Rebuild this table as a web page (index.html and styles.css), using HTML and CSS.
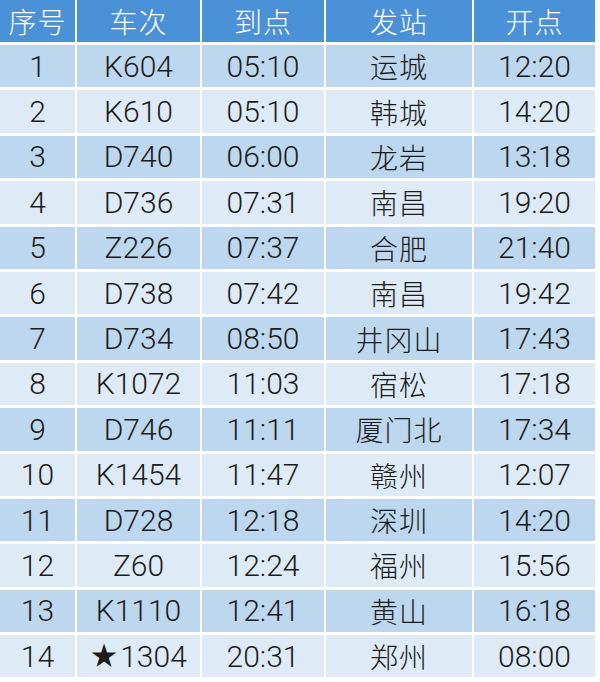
FILE: index.html
```html
<!DOCTYPE html>
<html lang="zh">
<head>
<meta charset="utf-8">
<link rel="stylesheet" href="styles.css">
</head>
<body>
<div class="sched">
  <div class="hd">序号</div><div class="hd">车次</div><div class="hd">到点</div><div class="hd">发站</div><div class="hd">开点</div>

  <div class="c d">1</div><div class="c d">K604</div><div class="c d">05:10</div><div class="c d zh">运城</div><div class="c d">12:20</div>
  <div class="c l">2</div><div class="c l">K610</div><div class="c l">05:10</div><div class="c l zh">韩城</div><div class="c l">14:20</div>
  <div class="c d">3</div><div class="c d">D740</div><div class="c d">06:00</div><div class="c d zh">龙岩</div><div class="c d">13:18</div>
  <div class="c l">4</div><div class="c l">D736</div><div class="c l">07:31</div><div class="c l zh">南昌</div><div class="c l">19:20</div>
  <div class="c d">5</div><div class="c d">Z226</div><div class="c d">07:37</div><div class="c d zh">合肥</div><div class="c d">21:40</div>
  <div class="c l">6</div><div class="c l">D738</div><div class="c l">07:42</div><div class="c l zh">南昌</div><div class="c l">19:42</div>
  <div class="c d">7</div><div class="c d">D734</div><div class="c d">08:50</div><div class="c d zh">井冈山</div><div class="c d">17:43</div>
  <div class="c l">8</div><div class="c l">K1072</div><div class="c l">11:03</div><div class="c l zh">宿松</div><div class="c l">17:18</div>
  <div class="c d">9</div><div class="c d">D746</div><div class="c d">11:11</div><div class="c d zh">厦门北</div><div class="c d">17:34</div>
  <div class="c l">10</div><div class="c l">K1454</div><div class="c l">11:47</div><div class="c l zh">赣州</div><div class="c l">12:07</div>
  <div class="c d">11</div><div class="c d">D728</div><div class="c d">12:18</div><div class="c d zh">深圳</div><div class="c d">14:20</div>
  <div class="c l">12</div><div class="c l">Z60</div><div class="c l">12:24</div><div class="c l zh">福州</div><div class="c l">15:56</div>
  <div class="c d">13</div><div class="c d">K1110</div><div class="c d">12:41</div><div class="c d zh">黄山</div><div class="c d">16:18</div>
  <div class="c l">14</div><div class="c l"><span class="star">★</span>1304</div><div class="c l">20:31</div><div class="c l zh">郑州</div><div class="c l">08:00</div>
</div>
</body>
</html>
```

FILE: styles.css
```css
html, body {
  margin: 0;
  padding: 0;
  background: #ffffff;
}

.sched {
  display: grid;
  grid-template-columns: 75px 123px 122px 146px 121px;
  grid-template-rows: 42px repeat(14, 42.4px);
  column-gap: 2px;
  row-gap: 3px;
  width: 595px;
}

.hd, .c {
  display: flex;
  align-items: center;
  justify-content: center;
}

.hd {
  background: #4b91d8;
  color: #ffffff;
  font-family: "Noto Sans CJK SC", sans-serif;
  font-weight: 300;
  font-size: 28px;
  letter-spacing: 1px;
}

.c {
  color: #1c1c1c;
  font-family: "Roboto", "Noto Sans CJK SC", sans-serif;
  font-weight: 300;
  font-size: 30px;
}

.c.zh {
  font-family: "Noto Sans CJK SC", sans-serif;
  font-weight: 300;
  font-size: 28px;
  letter-spacing: 1px;
}

.d { background: #bdd7ef; }
.l { background: #deebf7; }

.star {
  font-family: "DejaVu Sans", sans-serif;
  font-size: 28px;
  margin-right: 2px;
}
```
